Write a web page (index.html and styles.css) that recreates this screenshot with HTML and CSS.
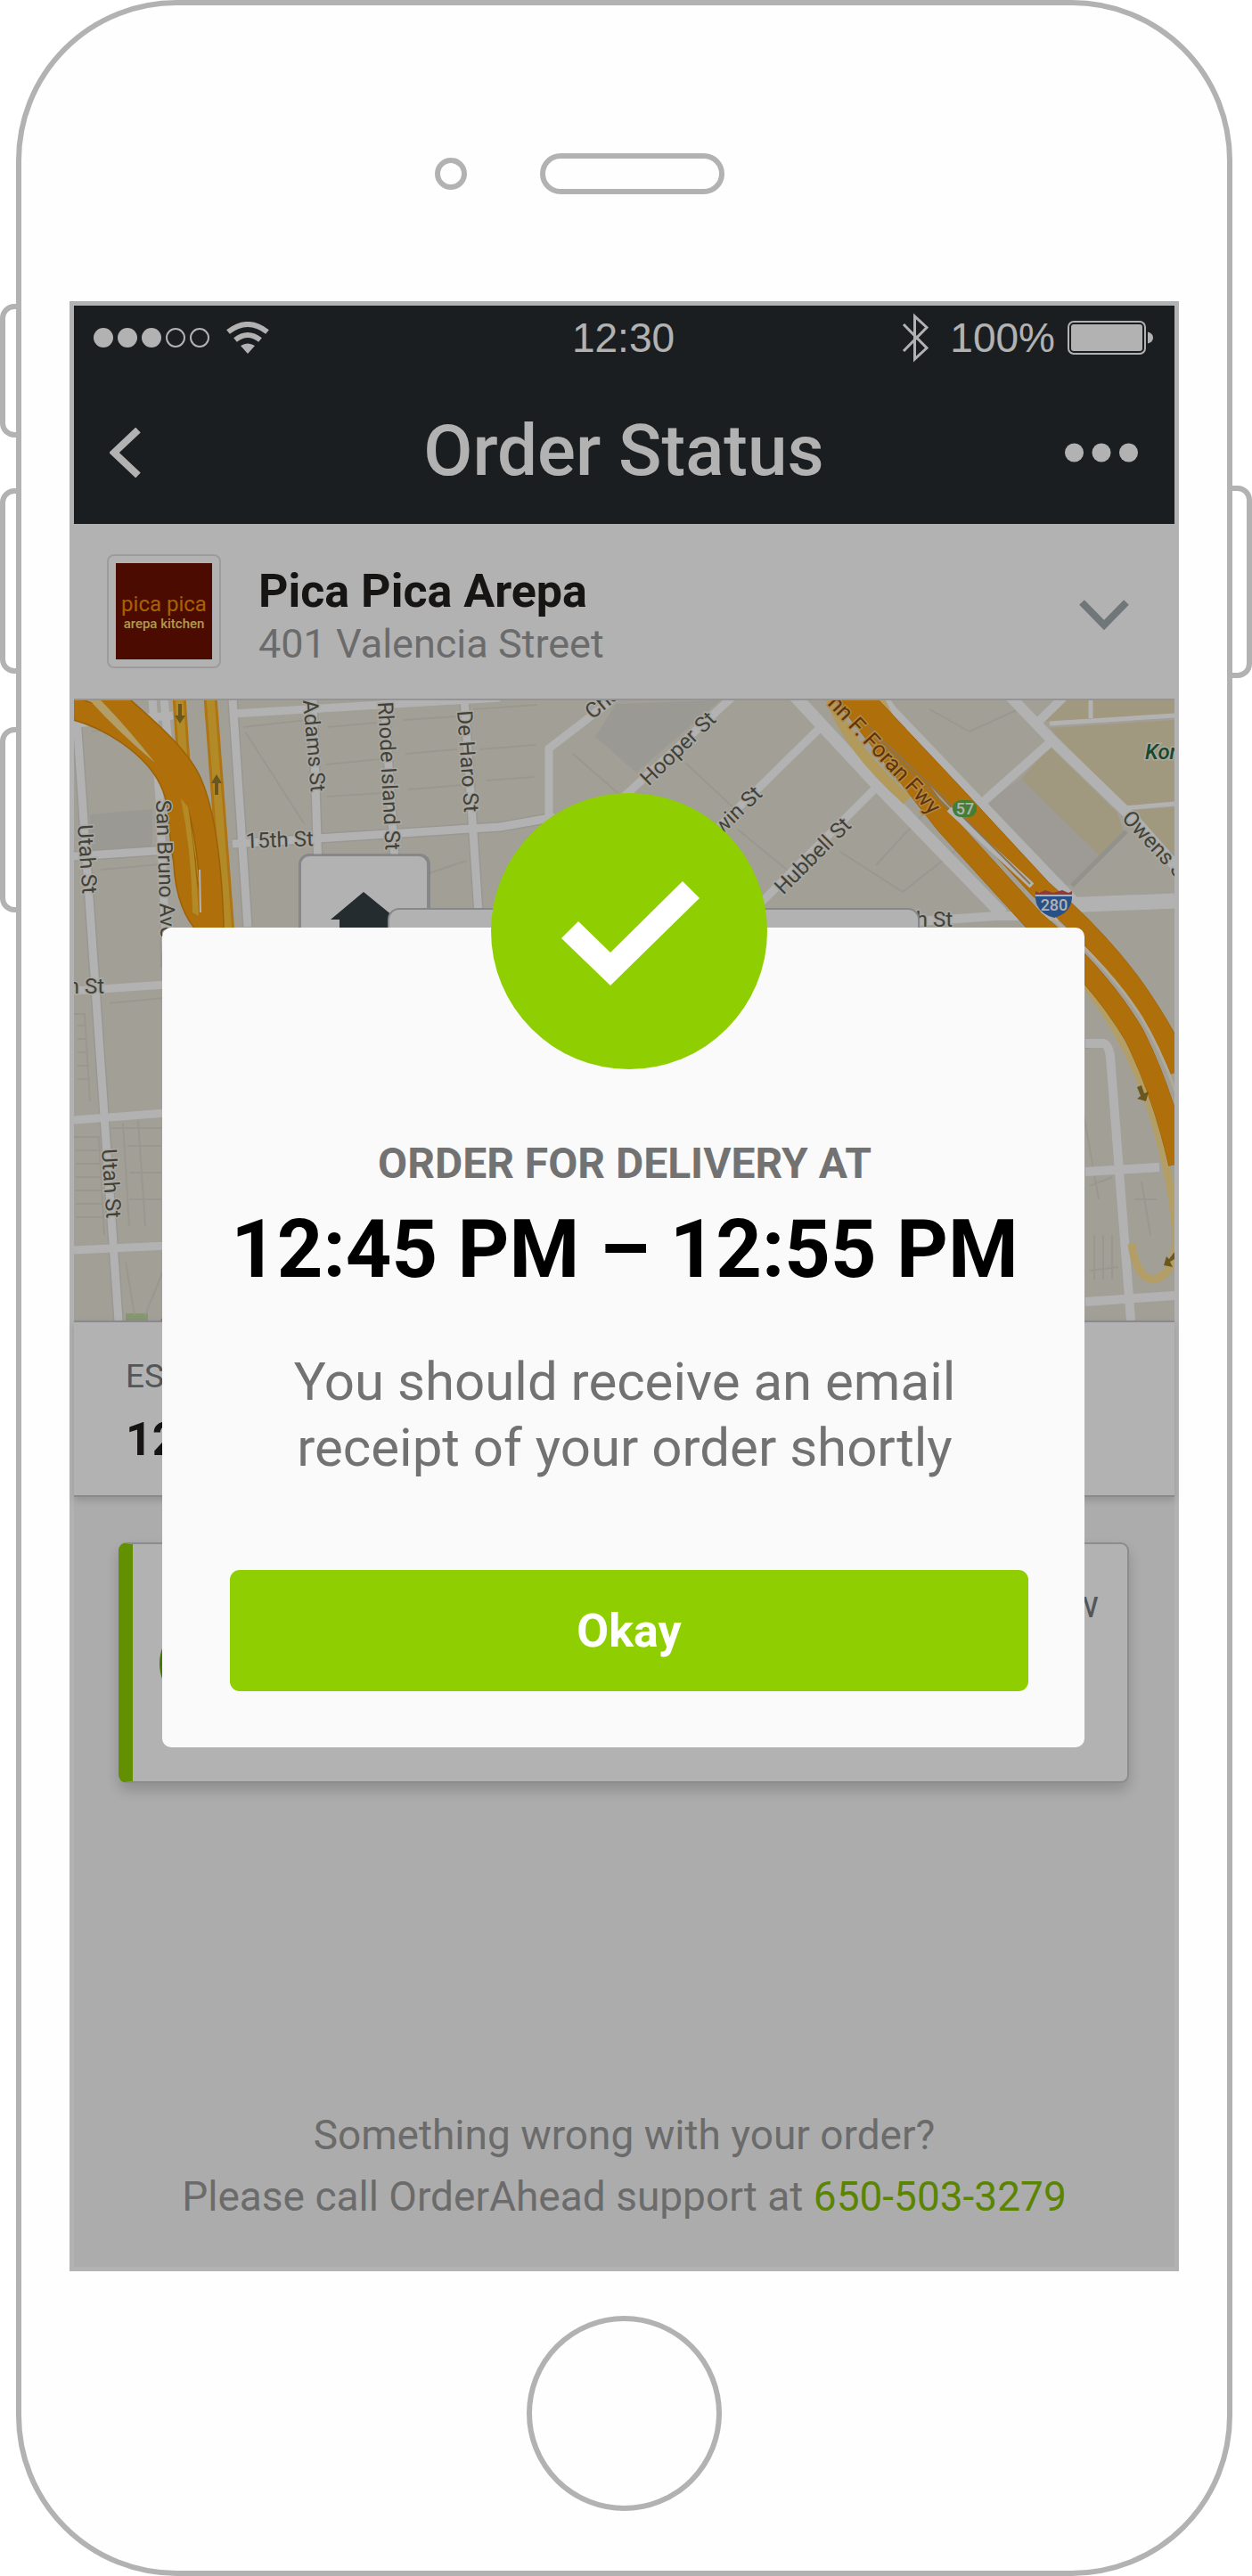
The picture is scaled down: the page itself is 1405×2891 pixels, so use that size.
FILE: index.html
```html
<!DOCTYPE html>
<html lang="en">
<head>
<meta charset="utf-8">
<meta name="viewport" content="width=device-width, initial-scale=1">
<title>Order Status</title>
<link rel="stylesheet" href="styles.css">
</head>
<body>
<div class="phone">
  <span class="side-button mute"></span>
  <span class="side-button volume-up"></span>
  <span class="side-button volume-down"></span>
  <span class="side-button power"></span>

  <div class="phone-top">
    <span class="camera"></span>
    <span class="speaker"></span>
  </div>

  <main class="screen">
    <header class="app-header">
      <div class="status-bar">
        <div class="status-left">
          <svg width="130" height="22" viewBox="0 0 130 22" aria-hidden="true">
            <g fill="#fff"><circle cx="11" cy="11" r="11"/><circle cx="38" cy="11" r="11"/><circle cx="65" cy="11" r="11"/></g>
            <g fill="none" stroke="#fff" stroke-width="2"><circle cx="92" cy="11" r="10"/><circle cx="119" cy="11" r="10"/></g>
          </svg>
          <svg width="48" height="36" viewBox="0 0 48 36" aria-hidden="true">
            <g fill="none" stroke="#fff" stroke-width="6">
              <path d="M2 11.500Q24 -5.500 46 11.500"/>
              <path d="M10 20.500Q24 9.500 38 20.500"/>
            </g>
            <path d="M16 27Q24 22 32 27L24 36Z" fill="#fff"/>
          </svg>
        </div>
        <span class="clock">12:30</span>
        <div class="status-right">
          <svg width="32" height="56" viewBox="0 0 32 56" aria-hidden="true">
            <path d="M2 13L28 39.500L14.500 52V4L28 16.500L2 43" fill="none" stroke="#fff" stroke-width="3"/>
          </svg>
          <span class="charge">100%</span>
          <svg width="96" height="38" viewBox="0 0 96 38" aria-hidden="true">
            <rect x="1" y="1" width="86" height="36" rx="6" fill="none" stroke="#fff" stroke-width="2"/>
            <rect x="4" y="4" width="80" height="30" rx="3" fill="#fff"/>
            <path d="M90 12.500Q96 14 96 19T90 25.500Z" fill="#fff"/>
          </svg>
        </div>
      </div>
      <div class="nav-bar">
        <button class="icon-button" type="button" aria-label="Back">
          <svg width="36" height="56" viewBox="0 0 36 56"><path d="M32 2.500L5 28L32 53.500" fill="none" stroke="#fff" stroke-width="8"/></svg>
        </button>
        <h1 class="nav-title">Order Status</h1>
        <button class="icon-button" type="button" aria-label="More">
          <svg width="82" height="22" viewBox="0 0 82 22" fill="#fff"><circle cx="10.500" cy="11" r="10.500"/><circle cx="41" cy="11" r="10.500"/><circle cx="71.500" cy="11" r="10.500"/></svg>
        </button>
      </div>
    </header>

    <section class="restaurant">
      <div class="logo">
        <div class="logo-art">
          <span class="logo-name">pica pica</span>
          <span class="logo-sub">arepa kitchen</span>
        </div>
      </div>
      <div class="restaurant-text">
        <h2 class="restaurant-name">Pica Pica Arepa</h2>
        <p class="restaurant-address">401 Valencia Street</p>
      </div>
      <button class="icon-button" type="button" aria-label="Show details">
        <svg width="56" height="42" viewBox="0 -8 56 42"><path d="M3 3L28 28.500L53 3" fill="none" stroke="#a3aaae" stroke-width="8"/></svg>
      </button>
    </section>

    <svg class="map" viewBox="0 0 1235 696" preserveAspectRatio="xMidYMid slice" role="img" aria-label="Delivery map">
      <rect width="1235" height="696" fill="#e8e4d8"/>
      <!-- blocks and parks -->
      <path d="M18 128L88 122V165L18 169Z" fill="#dfdbd3"/>
      <path d="M608 4L725 0L631 81L585 41Z" fill="#dfdbd3"/>
      <path d="M1018 116L1063 88L1151 175L1120 208L1105 205Z" fill="#e2ded7"/>
      <g fill="#e5dcb7">
        <path d="M1095 31L1235 22V116L1178 121Z"/>
        <path d="M1082 24L1110 0H1235V15Z"/>
        <path d="M1095 52L1171 126L1178 147L1151 175L1063 88Z"/>
        <path d="M1188 123L1235 120V178Z"/>
      </g>
      <rect x="58" y="688" width="25" height="8" fill="#bfd9a0"/>
      <path d="M97 696L106 684V696Z" fill="#fb9f11"/>
      <!-- parcel outlines -->
      <g fill="none" stroke="#ddd9cf" stroke-width="2">
        <path d="M20 35L86 27M30 190L96 184L98 300M40 340L100 334M42 480H100M190 30L262 22M192 35L258 138M285 30L340 25M283 72L343 66M284 108L346 104M370 22L430 18M372 60L430 55M375 100L436 95M448 10L520 5M462 90L516 86M455 55L518 50M380 200L440 180"/>
        <path d="M0 352H12L18 450M4 365H14M4 380H15M4 395H16M4 410H17M4 425H18M0 490H28L34 600M2 505H28M2 520H29M2 535H30M2 550H31M2 565H32M2 580H33M55 475L62 590M72 472L80 590M60 500H98M62 530H98M62 560H98M58 630L68 690M100 640L80 690"/>
        <path d="M686 70L745 125M745 145L800 190M560 60L640 130M860 170L930 215M900 185L960 120M930 215L1000 160M960 10L1005 35L1060 10M1120 390L1150 560M1140 390H1110M1190 560H1215M1198 540L1208 600M1140 545L1165 535M1140 640L1172 636M1145 600V650M1155 600V650M1165 600V650"/>
      </g>
      <!-- streets -->
      <g fill="none" stroke="#dcd9d2" stroke-width="12">
        <path d="M3 20L50 696M178 -2L195 254M268 -2L276 254M348 -2L365 254M438 -2L455 254"/>
        <path d="M0 175L105 168M178 161L478 142L540 131"/>
      </g>
      <g fill="none" stroke="#fff" stroke-width="9">
        <path d="M3 20L50 696M178 -2L195 254M268 -2L276 254M348 -2L365 254M438 -2L455 254"/>
        <path d="M88 -2L96 110L104 300M101 -2L107 60"/>
        <path d="M0 26L111 17M178 15L478 -3"/>
        <path d="M0 175L105 168M178 161L478 142L540 131M0 326L104 319M0 471L104 463M0 617L104 612"/>
        <path d="M640 -34L598 4L533 54V134M738 -3L615 110M841 27L620 244M901 97L760 238"/>
      </g>
      <g fill="none" stroke="#fff">
        <path d="M806 -8L908 102L1042 240" stroke-width="14"/>
        <path d="M905 -6L918 12L1111 214L1125 229" stroke-width="12"/>
        <path d="M948 248L1035 242H1110" stroke-width="10"/>
        <path d="M1108 230L1235 225" stroke-width="17"/>
        <path d="M1051 -4L1095 42L1190 134L1240 190" stroke-width="12"/>
        <path d="M1098 45L1018 116M1076 30L1110 -3" stroke-width="10"/>
        <path d="M1095 26L1235 17M1141 0V20M1178 121L1235 116" stroke-width="5"/>
        <path d="M1135 385H1154Q1161 385 1163 400L1186 696M1135 529L1218 524M1135 675L1235 668" stroke-width="10"/>
      </g>
      <path d="M1181 147L1120 208" stroke="#d2d1cb" stroke-width="5"/>
      <!-- ramps -->
      <g fill="none">
        <path d="M848 -6Q866 50 935 112" stroke="#ffdb85" stroke-width="12"/>
        <path d="M902 -6Q920 44 990 104" stroke="#ffe292" stroke-width="12"/>
        <path d="M1132 316Q1180 375 1206 450Q1232 530 1237 600Q1236 646 1211 650Q1192 648 1187 610" stroke="#ffe292" stroke-width="9"/>
        <path d="M118 -4L125 100L142 262M153 -4L173 262" stroke="#fba81c" stroke-width="15"/>
        <path d="M118 -4L125 100L142 262M153 -4L173 262" stroke="#ffc63a" stroke-width="9"/>
      </g>
      <!-- freeways -->
      <g fill="none" stroke="#e08c08" stroke-width="26">
        <path d="M-6 8C40 18 85 50 104 82S116 140 124 180Q126 230 150 254"/>
        <path d="M32 -12C70 22 115 58 130 90S154 180 156 262"/>
      </g>
      <g fill="none" stroke="#e08c08" stroke-width="24">
        <path d="M862 -10L978 138L1078 248Q1150 308 1190 376Q1222 440 1240 520"/>
        <path d="M878 -10L988 107L1085 212Q1150 268 1190 324Q1225 374 1242 415"/>
      </g>
      <g fill="none" stroke="#fb9f11" stroke-width="23">
        <path d="M-6 8C40 18 85 50 104 82S116 140 124 180Q126 230 150 254"/>
        <path d="M32 -12C70 22 115 58 130 90S154 180 156 262"/>
        <path d="M862 -10L978 138L1078 248Q1150 308 1190 376Q1222 440 1240 520"/>
        <path d="M878 -10L988 107L1085 212Q1150 268 1190 324Q1225 374 1242 415"/>
      </g>
      <path d="M14 -4L30 0Q56 26 91 70Q50 36 14 -4Z" fill="#ffe292"/>
      <path d="M120 110L128 120Q136 170 140 242L133 238Q132 170 120 110Z" fill="#ffc63a"/>
      <path d="M141 190L142 238" stroke="#fff" stroke-width="2"/>
      <path d="M982 122L1075 208" fill="none" stroke="#fff" stroke-width="7"/>
      <path d="M892 30L985 118L1073 206M896 38L982 122" fill="none" stroke="#c9a873" stroke-width="2"/>
      <path d="M1088 236Q1160 296 1198 356Q1222 396 1240 450" fill="none" stroke="#fff4dc" stroke-width="3"/>
      <!-- one-way arrows -->
      <g fill="#9a7d2c">
        <path d="M117 4H121V17H125L119 26L113 17H117Z"/>
        <path d="M158 106H162V93H166L160 83L154 93H158Z"/>
        <path d="M1193 434L1198 432L1201 441L1206 439L1203 450L1193 447L1197 444Z"/>
        <path d="M1235 619V627L1230 630L1233 636L1223 634L1226 624L1229 627Z"/>
      </g>
      <!-- street names -->
      <g class="map-label">
        <text transform="translate(4 140) rotate(86)">Utah St</text>
        <text transform="translate(31 504) rotate(86)">Utah St</text>
        <text transform="translate(92 112) rotate(88)">San Bruno Ave</text>
        <text transform="translate(257 0) rotate(85)">Adams St</text>
        <text transform="translate(341 2) rotate(87)">Rhode Island St</text>
        <text transform="translate(430 12) rotate(86)">De Haro St</text>
        <text transform="translate(193 166) rotate(-2)">15th St</text>
        <text x="34" y="329" text-anchor="end">h St</text>
        <text x="986" y="254" text-anchor="end">h St</text>
        <text transform="translate(582 22) rotate(-40)">Cha</text>
        <text transform="translate(645 97) rotate(-44)">Hooper St</text>
        <text transform="translate(716 162) rotate(-44)">Irwin St</text>
        <text transform="translate(796 219) rotate(-45)">Hubbell St</text>
        <text transform="translate(1175 133) rotate(47)">Owens St</text>
      </g>
      <text class="map-label freeway" transform="translate(845 4) rotate(47)">nn F. Foran Fwy</text>
      <text class="map-label park" x="1202" y="66">Kor</text>
      <rect x="986" y="112" width="27" height="19" rx="9" fill="#62b44a"/>
      <text class="map-badge" x="1000" y="128">57</text>
      <path d="M1079 218H1120Q1121 238 1100 244Q1078 238 1079 218Z" fill="#3a74c4"/>
      <path d="M1079 218V214L1083 216L1090 213L1099 216L1109 213L1116 216L1120 214V218Z" fill="#d0545a"/>
      <path d="M1079 219H1120" stroke="#fff" stroke-width="2"/>
      <text class="map-badge" x="1100" y="236">280</text>
      <!-- home pin and driver card -->
      <rect x="252" y="172" width="148" height="150" rx="12" fill="#6d7280" fill-opacity=".3"/>
      <rect x="254" y="174" width="143" height="146" rx="10" fill="#fff" stroke="#c2c3c8" stroke-width="2"/>
      <path d="M325 215L363 246H354V290H298V246H288Z" fill="#363f45"/>
      <rect x="353" y="234" width="595" height="120" rx="12" fill="#fff" stroke="#c2c3c8" stroke-width="2"/>
    </svg>

    <section class="estimate">
      <span class="estimate-label">ES</span>
      <strong class="estimate-time">12</strong>
    </section>

    <section class="orders">
      <article class="order-card">
        <span class="order-mark"></span>
        <a class="order-link" href="#order">View</a>
      </article>
    </section>

    <footer class="support">
      <p>Something wrong with your order?</p>
      <p>Please call OrderAhead support at <a class="support-phone" href="tel:650-503-3279">650-503-3279</a></p>
    </footer>

    <div class="overlay">
      <section class="dialog" role="dialog" aria-labelledby="dialog-time">
        <svg class="dialog-check" width="310" height="310" viewBox="0 0 310 310" aria-hidden="true">
          <circle cx="155" cy="155" r="155" fill="#8fce00"/>
          <path d="M79 163L98 144L134 179L215 99L234 118L134 216Z" fill="#fff"/>
        </svg>
        <div class="dialog-text">
          <p class="dialog-label">ORDER FOR DELIVERY AT</p>
          <h2 class="dialog-time" id="dialog-time">12:45 PM – 12:55 PM</h2>
          <p class="dialog-note">You should receive an email<br>receipt of your order shortly</p>
        </div>
        <button class="okay" type="button">Okay</button>
      </section>
    </div>
  </main>

  <button class="home-button" type="button" aria-label="Home"></button>
</div>
</body>
</html>
```
FILE: styles.css
```css
* {
  box-sizing: border-box;
}

body {
  margin: 0;
  background: #fff;
  color: #211d1e;
  font-family: Roboto, "Liberation Sans", sans-serif;
}

h1,
h2,
p {
  margin: 0;
}

button {
  padding: 0;
  border: 0;
  background: none;
  font: inherit;
  cursor: pointer;
}

svg {
  display: block;
}

/* Handset */
.phone {
  position: relative;
  display: flex;
  flex-direction: column;
  margin: 0 22px 0 18px;
  padding: 0 54px;
  border: 6px solid #b2b2b2;
  border-radius: 180px;
  background: #fefefe;
}

.side-button {
  position: absolute;
  left: -24px;
  width: 24px;
  border: 6px solid #b2b2b2;
  border-radius: 16px 0 0 16px;
}

.mute {
  top: 335px;
  height: 150px;
}

.volume-up {
  top: 542px;
  height: 208px;
}

.volume-down {
  top: 810px;
  height: 208px;
}

.power {
  top: 539px;
  right: -28px;
  left: auto;
  width: 28px;
  height: 216px;
  border-radius: 0 16px 16px 0;
}

.phone-top {
  display: flex;
  align-items: center;
  justify-content: center;
  gap: 82px;
  height: 332px;
  padding: 46px 100px 0 0;
}

.camera {
  width: 36px;
  height: 36px;
  border: 6px solid #b2b2b2;
  border-radius: 50%;
}

.speaker {
  width: 207px;
  height: 46px;
  border: 6px solid #b2b2b2;
  border-radius: 23px;
}

.home-button {
  align-self: center;
  width: 219px;
  height: 219px;
  margin: 50px 0 67px;
  border: 6px solid #b2b2b2;
  border-radius: 50%;
}

/* Screen */
.screen {
  position: relative;
  border: 5px solid #b2b2b2;
  background: #f7f7f7;
}

.app-header {
  background: #262b2e;
  color: #fff;
}

.status-bar {
  display: grid;
  grid-template-columns: 1fr auto 1fr;
  align-items: center;
  height: 72px;
  padding: 0 24px 0 22px;
  font-family: "Liberation Sans", sans-serif;
  font-size: 46px;
  line-height: 52px;
}

.status-left {
  display: flex;
  align-items: center;
  gap: 19px;
}

.status-right {
  display: flex;
  align-items: center;
  justify-content: flex-end;
}

.charge {
  margin: 0 14px 0 22px;
}

.nav-bar {
  display: grid;
  grid-template-columns: 1fr auto 1fr;
  align-items: center;
  height: 173px;
  padding: 12px 41px 0 40px;
}

.nav-bar .icon-button:first-child {
  justify-self: start;
}

.nav-bar .icon-button:last-child {
  justify-self: end;
}

.nav-title {
  padding-bottom: 4px;
  font-size: 80px;
  font-weight: 500;
  line-height: 96px;
}

.restaurant {
  display: flex;
  align-items: center;
  gap: 42px;
  height: 198px;
  padding: 0 51px 0 37px;
  border-bottom: 2px solid #d4d5d8;
  background: #fff;
}

.logo {
  padding: 8px;
  border: 2px solid #e0e0e0;
  border-radius: 8px;
}

.logo-art {
  display: flex;
  flex-direction: column;
  align-items: center;
  justify-content: center;
  width: 108px;
  height: 108px;
  background: #6e1000;
  white-space: nowrap;
}

.logo-name {
  color: #f08c07;
  font-size: 24px;
  line-height: 28px;
}

.logo-sub {
  color: #fbdc72;
  font-size: 15px;
  font-weight: 500;
  line-height: 16px;
}

.restaurant-text {
  flex: 1;
  padding-top: 12px;
}

.restaurant-name {
  font-size: 52px;
  line-height: 62px;
}

.restaurant-address {
  color: #9a9a9a;
  font-size: 45px;
  line-height: 56px;
}

.map {
  width: 100%;
  height: 696px;
}

.map-label {
  fill: #5f5e50;
  font-size: 24px;
  stroke: #f4f1ea;
  stroke-width: 3px;
  paint-order: stroke;
}

.freeway {
  fill: #8a4a10;
  font-size: 25px;
  stroke: #ffc766;
}

.park {
  fill: #1f6a40;
  font-style: italic;
  font-weight: 500;
}

.map-badge {
  fill: #fff;
  font-size: 18px;
  font-weight: 500;
  text-anchor: middle;
}

.estimate {
  position: relative;
  display: flex;
  flex-direction: column;
  padding: 36px 58px 16px;
  border: 2px solid #c4c4cc;
  border-width: 2px 0;
  background: #fff;
  box-shadow: 0 4px 8px rgba(0, 0, 0, .15);
}

.estimate-label {
  color: #767d82;
  font-size: 37px;
  line-height: 50px;
}

.estimate-time {
  font-size: 52px;
  line-height: 92px;
}

.orders {
  padding: 51px 51px 0 50px;
}

.order-card {
  display: flex;
  align-items: flex-start;
  justify-content: space-between;
  height: 270px;
  padding: 38px 32px 0 30px;
  border: 2px solid #c8c8ce;
  border-left: 16px solid #8fce00;
  border-radius: 9px;
  background: #fff;
  box-shadow: 0 8px 16px rgba(0, 0, 0, .18);
}

.order-mark {
  width: 100px;
  height: 100px;
  margin-top: 46px;
  border-radius: 50%;
  background: #5fae00;
}

.order-link {
  color: #767d82;
  font-size: 42px;
  line-height: 60px;
  text-decoration: none;
}

.support {
  padding: 361px 40px 44px;
  color: #9a9a9a;
  font-size: 46px;
  line-height: 69px;
  text-align: center;
}

.support-phone {
  color: #83bd00;
  text-decoration: none;
}

/* Confirmation dialog */
.overlay {
  position: absolute;
  inset: 0;
  padding: 698px 101px 0 99px;
  background: rgba(0, 0, 0, .3);
}

.dialog {
  display: flex;
  flex-direction: column;
  padding: 0 63px 63px 76px;
  border-radius: 10px;
  background: #fafafa;
}

.dialog-check {
  align-self: center;
  margin: -151px 0 76px;
}

.dialog-text {
  padding-right: 10px;
  text-align: center;
}

.dialog-label {
  color: #727272;
  font-size: 48px;
  font-weight: 700;
  line-height: 60px;
}

.dialog-time {
  color: #000;
  font-size: 90px;
  line-height: 134px;
  white-space: nowrap;
}

.dialog-note {
  margin-top: 44px;
  color: #727272;
  font-size: 60px;
  line-height: 74px;
}

.okay {
  height: 136px;
  margin-top: 100px;
  border-radius: 11px;
  background: #8fce00;
  color: #fff;
  font-size: 52px;
  font-weight: 700;
}
```
